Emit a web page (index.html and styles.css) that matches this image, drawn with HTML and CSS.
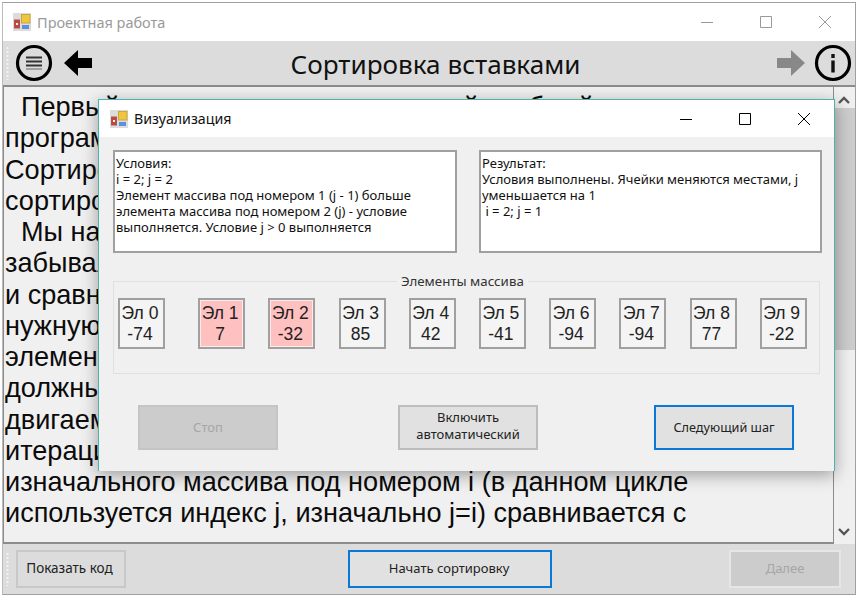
FILE: index.html
```html
<!DOCTYPE html>
<html lang="ru">
<head>
    <meta charset="UTF-8">
    <title>Проектная работа</title>
    <link rel="stylesheet" href="styles.css">
</head>
<body>
    <svg class="defs" width="0" height="0">
        <symbol id="appicon" viewBox="0 0 18 18">
            <rect width="18" height="18" fill="#dcdcdc"/>
            <rect x="8.5" y="1.5" width="8.5" height="8.5" fill="#f0c63c" stroke="#c9a640" stroke-width="1"/>
            <rect x="1.5" y="7" width="5" height="8" fill="#c8423a" stroke="#a8564f" stroke-width="1"/>
            <rect x="3" y="10" width="2" height="2" fill="#f4f4f4"/>
            <rect x="9" y="12" width="7" height="4" fill="#5a8fe2"/>
        </symbol>
    </svg>

    <!-- Main window -->
    <div class="window">
        <div class="titlebar">
            <svg class="appicon"><use href="#appicon"/></svg>
            <span class="title">Проектная работа</span>
            <div class="winbtns inactive">
                <svg width="12" height="12" viewBox="0 0 12 12"><path d="M0 6.5h12" stroke="currentColor"/></svg>
                <svg width="12" height="12" viewBox="0 0 12 12"><path d="M.5.5h11v11H.5z" fill="none" stroke="currentColor"/></svg>
                <svg width="12" height="12" viewBox="0 0 12 12"><path d="M0 0l12 12M12 0L0 12" stroke="currentColor"/></svg>
            </div>
        </div>

        <div class="toolbar">
            <div class="grip"></div>
            <svg class="tool tool-menu" width="38" height="38" viewBox="0 0 38 38">
                <circle cx="19" cy="19" r="16.5" fill="none" stroke="#000" stroke-width="3.2"/>
                <path d="M11 13.5h16M11 17.5h16M11 21.5h16" stroke="#333" stroke-width="2"/>
                <path d="M11 25h16" stroke="#777" stroke-width="1.2"/>
            </svg>
            <svg class="tool tool-back" width="30" height="28" viewBox="0 0 30 28">
                <path d="M1 14L15 1v8h14v10H15v8z" fill="#000"/>
            </svg>
            <h1 class="heading">Сортировка вставками</h1>
            <svg class="tool tool-forward" width="30" height="28" viewBox="0 0 30 28">
                <path d="M29 14L15 1v8H1v10h14v8z" fill="#888"/>
            </svg>
            <svg class="tool tool-info" width="38" height="38" viewBox="0 0 38 38">
                <circle cx="19" cy="19" r="16.5" fill="none" stroke="#000" stroke-width="3.2"/>
                <path d="M19 10v4M19 16.5v12" stroke="#111" stroke-width="3.4"/>
            </svg>
        </div>

        <div class="content">
            <div class="textbox">
                <p class="line indent">Первый алгоритм сортировки в этой учебный</p>
                <p class="line">программе</p>
                <p class="line">Сортировка</p>
                <p class="line">сортировки</p>
                <p class="line indent">Мы начинаем</p>
                <p class="line">забывая</p>
                <p class="line">и сравниваем</p>
                <p class="line">нужную</p>
                <p class="line">элементы</p>
                <p class="line">должны</p>
                <p class="line">двигаем</p>
                <p class="line">итерации</p>
                <p class="line">изначального массива под номером i (в данном цикле</p>
                <p class="line">используется индекс j, изначально j=i) сравнивается с</p>
            </div>
            <div class="scrollbar">
                <svg width="12" height="8" viewBox="0 0 12 8"><path d="M1 7l5-5 5 5" fill="none" stroke="#555" stroke-width="2.4"/></svg>
                <div class="thumb"></div>
                <svg width="12" height="8" viewBox="0 0 12 8"><path d="M1 1l5 5 5-5" fill="none" stroke="#555" stroke-width="2.4"/></svg>
            </div>
        </div>

        <div class="bottombar">
            <div class="grip"></div>
            <button class="btn btn-code">Показать код</button>
            <button class="btn btn-start focused">Начать сортировку</button>
            <button class="btn btn-next" disabled>Далее</button>
        </div>
    </div>

    <!-- Visualization dialog -->
    <div class="dialog">
        <div class="dialog-title">
            <svg class="appicon"><use href="#appicon"/></svg>
            <span class="dialog-name">Визуализация</span>
            <div class="winbtns">
                <svg width="12" height="12" viewBox="0 0 12 12"><path d="M0 6.5h12" stroke="currentColor"/></svg>
                <svg width="12" height="12" viewBox="0 0 12 12"><path d="M.5.5h11v11H.5z" fill="none" stroke="currentColor"/></svg>
                <svg width="12" height="12" viewBox="0 0 12 12"><path d="M0 0l12 12M12 0L0 12" stroke="currentColor"/></svg>
            </div>
        </div>

        <div class="dialog-body">
            <div class="infos">
                <div class="info">Условия:<br>i = 2; j = 2<br>Элемент массива под номером 1 (j - 1) больше элемента массива под номером 2 (j) - условие выполняется. Условие j &gt; 0 выполняется</div>
                <div class="info">Результат:<br>Условия выполнены. Ячейки меняются местами, j уменьшается на 1<br>&nbsp;i = 2; j = 1</div>
            </div>

            <fieldset class="group">
                <legend>Элементы массива</legend>
                <div class="cell first"><span>Эл 0</span><span>-74</span></div>
                <div class="cell hot"><span>Эл 1</span><span>7</span></div>
                <div class="cell hot"><span>Эл 2</span><span>-32</span></div>
                <div class="cell"><span>Эл 3</span><span>85</span></div>
                <div class="cell"><span>Эл 4</span><span>42</span></div>
                <div class="cell"><span>Эл 5</span><span>-41</span></div>
                <div class="cell"><span>Эл 6</span><span>-94</span></div>
                <div class="cell"><span>Эл 7</span><span>-94</span></div>
                <div class="cell"><span>Эл 8</span><span>77</span></div>
                <div class="cell"><span>Эл 9</span><span>-22</span></div>
            </fieldset>

            <div class="actions">
                <button class="btn btn-action" disabled>Стоп</button>
                <button class="btn btn-action btn-two">Включить<br>автоматический</button>
                <button class="btn btn-action focused">Следующий шаг</button>
            </div>
        </div>
    </div>
</body>
</html>
```

FILE: styles.css
```css
/* General Styles */
body {
    margin: 0;
    width: 860px;
    height: 596px;
    overflow: hidden;
    background-color: #fff;
    font-family: "Noto Sans", sans-serif;
    position: relative;
}

.defs {
    position: absolute;
}

.appicon {
    width: 18px;
    height: 18px;
    flex: none;
}

.winbtns {
    margin-left: auto;
    display: flex;
    gap: 47px;
    color: #000;
}

.winbtns.inactive {
    color: #999;
    margin-right: 24px;
}

/* Main window */
.window {
    width: 854px;
    height: 593px;
    margin: 2px 0 0 2px;
    border: 1px solid #a0a0a0;
    border-left-color: #bbb;
    box-sizing: border-box;
    display: flex;
    flex-direction: column;
    background-color: #f0f0f0;
}

.titlebar {
    height: 38px;
    flex: none;
    display: flex;
    align-items: center;
    padding-left: 10px;
    background-color: #fff;
}

.title {
    margin-left: 6px;
    font-size: 14.5px;
    color: #9a9a9a;
}

.toolbar {
    height: 46px;
    flex: none;
    display: flex;
    align-items: center;
    background-color: #dcdcdc;
    padding: 0 3px 0 2px;
    border-bottom: 2px solid #8c8c8c;
    box-sizing: border-box;
}

.grip {
    width: 3px;
    height: 34px;
    flex: none;
    margin-left: 1px;
    background-image: radial-gradient(circle, #f5f5f5 1px, transparent 1.2px);
    background-size: 3px 4px;
}

.tool {
    flex: none;
}

.tool-menu {
    margin-left: 6px;
}

.tool-back {
    margin-left: 10px;
}

.tool-forward {
    margin-left: 1px;
}

.tool-info {
    margin-left: 8px;
}

.heading {
    flex: 1;
    margin: 0;
    padding: 2px 0 0 3px;
    text-align: center;
    font-size: 26.1px;
    font-weight: normal;
    color: #111;
}

.content {
    flex: 1;
    min-height: 0;
    display: flex;
}

.textbox {
    width: 831px;
    flex: none;
    box-sizing: border-box;
    border: 1px solid #8c8c8c;
    border-top: none;
    border-bottom: 2px solid #8c8c8c;
    overflow: hidden;
    padding: 4px 0 0 1px;
    font-family: "Liberation Sans", sans-serif;
    font-size: 27.1px;
    color: #0b0b0b;
}

.line {
    margin: 0;
    height: 31.25px;
    line-height: 31.25px;
    white-space: nowrap;
}

.indent {
    text-indent: 16px;
}

.scrollbar {
    flex: 1;
    display: flex;
    flex-direction: column;
    align-items: center;
    justify-content: space-between;
    padding: 9px 2px 8px 0;
    box-sizing: border-box;
    position: relative;
}

.thumb {
    position: absolute;
    top: 21px;
    left: 0;
    right: 0;
    height: 242px;
    background-color: #cdcdcd;
}

.bottombar {
    height: 50px;
    flex: none;
    display: flex;
    align-items: center;
    background-color: #dcdcdc;
    padding: 0 14px 0 2px;
    box-sizing: border-box;
}

.btn {
    font-family: "Noto Sans", sans-serif;
    font-size: 13px;
    color: #222;
    background-color: #e1e1e1;
    border: 2px solid #bdbdbd;
    padding: 0;
    text-align: center;
    line-height: 17px;
}

.btn:disabled {
    background-color: #cccccc;
    border-color: #c4c4c4;
    color: #a6a6a6;
}

.btn.focused {
    border: 2px solid #0a78d7;
}

.bottombar .btn {
    padding-bottom: 2px;
}

.btn-code {
    width: 110px;
    height: 38px;
    margin-left: 7px;
    background-color: #dcdcdc;
    border-color: #c8c8c8;
    font-size: 13.5px;
    padding-right: 3px;
}

.btn-start {
    width: 204px;
    height: 38px;
    margin-left: 222px;
    padding-right: 2px;
}

.btn-next {
    width: 112px;
    height: 38px;
    margin-left: auto;
}

.btn-next:disabled {
    border-color: #e6e6e6;
}

/* Dialog */
.dialog {
    position: absolute;
    left: 98px;
    top: 99px;
    width: 737px;
    height: 372px;
    box-sizing: border-box;
    border: 1px solid #4ab5ae;
    border-bottom: none;
    background-color: #f0f0f0;
    box-shadow: 0 4px 16px rgba(0, 0, 0, 0.35);
    display: flex;
    flex-direction: column;
}

.dialog-title {
    height: 37px;
    flex: none;
    display: flex;
    align-items: center;
    padding-left: 11px;
    background-color: #fff;
}

.dialog-name {
    margin-left: 6px;
    font-size: 14.2px;
    color: #111;
}

.dialog-title .winbtns {
    margin-right: 24px;
}

.dialog-body {
    flex: 1;
    padding: 13px 12px 0 14px;
}

.infos {
    display: flex;
    gap: 22px;
}

.info {
    width: 344px;
    height: 103px;
    box-sizing: border-box;
    border: 2px solid #a0a0a0;
    background-color: #fff;
    padding: 3px 1px;
    font-size: 13px;
    line-height: 16px;
    color: #111;
}

.info:first-child {
    width: 345px;
}

.group {
    margin: 21px 0 0 0;
    padding: 10px 0 0 4px;
    width: 707px;
    height: 100px;
    box-sizing: border-box;
    border: 1px solid #e0e0e0;
    display: flex;
    gap: 23.2px;
}

.group legend {
    margin-left: 279px;
    padding: 0 4px;
    font-size: 13.3px;
    line-height: 14px;
    color: #333;
}

.cell {
    width: 47px;
    height: 51px;
    box-sizing: border-box;
    border: 2px solid #a0a0a0;
    background-color: #f4f4f4;
    padding: 1px 3px 0 0;
    display: flex;
    flex-direction: column;
    align-items: center;
    justify-content: center;
    font-family: "Liberation Sans", sans-serif;
    font-size: 17.5px;
    line-height: 21.5px;
    color: #222;
}

.cell.first {
    margin-right: 10px;
}

.cell.hot {
    background-color: #ffc0c0;
    box-shadow: inset 0 0 0 1px #fbeaea;
}

.actions {
    margin-top: 31px;
    padding-left: 25px;
    display: flex;
    gap: 120px;
}

.btn-action {
    width: 140px;
    height: 45px;
}

.btn-two {
    padding-bottom: 3px;
}

.btn-action.focused {
    margin-left: -4px;
    font-size: 12.7px;
}
```
